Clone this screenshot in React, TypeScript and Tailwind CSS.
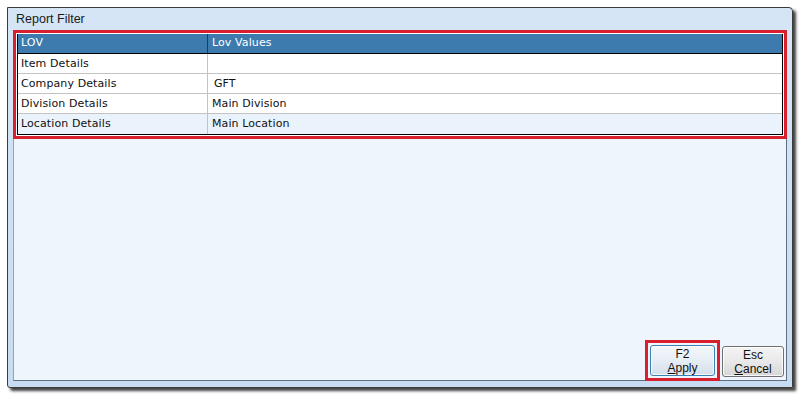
import React from "react";

const rows = [
  { lov: "Item Details", value: "" },
  { lov: "Company Details", value: "GFT", indent: true },
  { lov: "Division Details", value: "Main Division" },
  { lov: "Location Details", value: "Main Location", tint: true },
];

const ReportFilter = () => {
  return (
    <div className="w-[806px] h-[402px] bg-white pl-[7px] pt-[7px] font-['DejaVu_Sans',sans-serif]">
      {/* Window */}
      <div className="w-[786px] h-[381px] flex flex-col border border-[#3b3b3b] rounded-tr-[4px] rounded-bl-[3px] bg-gradient-to-b from-[#d5e5f5] to-[#c8dcf1] shadow-[3px_3px_3px_rgba(0,0,0,0.75)]">
        <div className="h-[22px] flex items-center pl-[8px] text-[12.5px] text-[#1a1a1a] font-['Liberation_Sans',sans-serif]">
          Report Filter
        </div>

        {/* Inner panel */}
        <div className="flex-1 mx-[5px] mb-[6px] flex flex-col bg-[#eef5fd] border border-l-[#8aa6c4] border-t-[#8aa6c4] border-r-[#5e6f82] border-b-[#5e6f82]">
          {/* Grid, highlighted */}
          <div className="-m-px border-[3px] border-[#d71f2d] bg-white p-px">
            <div className="border-x border-b border-black text-[11px] tracking-[0.1px]">
              <div className="h-[20px] flex bg-[#3d7aad] text-white border-b border-black">
                <div className="w-[190px] flex items-center pl-[3px] border-r border-[#1f3d5a]">
                  LOV
                </div>
                <div className="flex-1 flex items-center pl-[4px]">Lov Values</div>
              </div>
              {rows.map((row, i) => (
                <div
                  key={i}
                  className={`h-[20px] flex text-[#111] ${
                    i < rows.length - 1 ? "border-b border-[#c3c3c3]" : ""
                  } ${row.tint ? "bg-[#eaf3fc]" : "bg-white"}`}
                >
                  <div className="w-[190px] flex items-center pl-[3px] pt-px border-r border-[#c3c3c3]">
                    {row.lov}
                  </div>
                  <div
                    className={`flex-1 flex items-center pt-px ${
                      row.indent ? "pl-[6px]" : "pl-[4px]"
                    }`}
                  >
                    {row.value}
                  </div>
                </div>
              ))}
            </div>
          </div>

          {/* Buttons */}
          <div className="mt-auto flex justify-end items-end gap-[2px] pr-[2px] pb-[3px]">
            <div className="border-[3px] border-[#d71f2d] p-[2px] -mb-[4px]">
              <button className="w-[65px] h-[31px] rounded-[3px] border border-[#3c7fb1] bg-gradient-to-b from-[#f3f7fa] via-[#e6eef5] to-[#d3dfea] shadow-[inset_0_0_0_1px_rgba(255,255,255,0.8)] flex flex-col items-center justify-center leading-[14px] text-[12px] text-[#111] font-['Liberation_Sans',sans-serif]">
                <span>F2</span>
                <span>
                  <span className="underline">A</span>pply
                </span>
              </button>
            </div>
            <button className="w-[62px] h-[31px] rounded-[3px] border border-[#707070] bg-gradient-to-b from-[#f4f4f4] via-[#e9e9e9] to-[#d6d6d6] shadow-[inset_0_0_0_1px_rgba(255,255,255,0.8)] flex flex-col items-center justify-center leading-[14px] text-[12px] text-[#111] font-['Liberation_Sans',sans-serif]">
              <span>Esc</span>
              <span>
                <span className="underline">C</span>ancel
              </span>
            </button>
          </div>
        </div>
      </div>
    </div>
  );
};

export default function App() {
  return <ReportFilter />;
}
